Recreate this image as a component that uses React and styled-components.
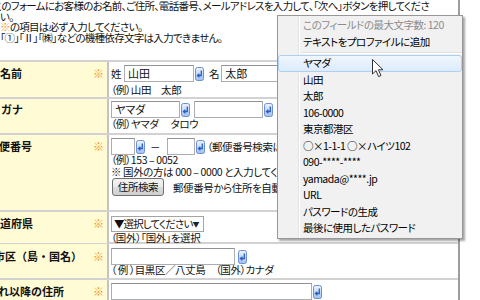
import React from "react";
import styled, { createGlobalStyle } from "styled-components";

const Global = createGlobalStyle`
  html, body { margin: 0; padding: 0; background: #fff; }
  body {
    width: 480px; height: 300px; overflow: hidden;
    font-family: "Noto Sans CJK JP", "Noto Sans", sans-serif;
    color: #111;
  }
`;

const Page = styled.div`
  position: relative;
  width: 480px;
  height: 300px;
  overflow: hidden;
  background: #fff;
`;

const Frame = styled.div`
  width: 458px;
  height: 300px;
  border-right: 2px solid #9d9d9d;
  overflow: hidden;
`;

const Intro = styled.div`
  height: 60px;
  box-sizing: border-box;
  padding-top: 1px;
  font-size: 10.5px;
  line-height: 10.5px;
  font-feature-settings: "palt";
  letter-spacing: -0.7px;
`;

const IntroLine = styled.div`
  white-space: nowrap;
  margin-left: ${(p) => p.$shift || 0}px;
`;

const Mark = styled.span`
  color: #f7941d;
  font-weight: normal;
`;

const Row = styled.div`
  display: grid;
  grid-template-columns: 109px 1fr;
  height: ${(p) => p.$h}px;
  box-sizing: border-box;
  border-top: 2px solid #d2d2d2;
`;

const LabelCell = styled.div`
  display: flex;
  justify-content: space-between;
  align-items: flex-start;
  box-sizing: border-box;
  background: #fffbd4;
  border-right: 2px solid #c3c3c3;
  padding: ${(p) => p.$pad}px 3px 0 0;
  overflow: hidden;
  font-size: 11px;
  line-height: 17px;
`;

const LabelText = styled.span`
  font-weight: bold;
  white-space: nowrap;
  margin-left: -${(p) => p.$cut}px;
`;

const InputCell = styled.div`
  display: flex;
  flex-direction: column;
  align-items: flex-start;
  padding: ${(p) => p.$pad}px 0 0 2px;
  font-size: 10.5px;
  letter-spacing: -0.4px;
  font-feature-settings: "palt";
  min-width: 0;
`;

const Line = styled.div`
  display: flex;
  align-items: center;
  height: ${(p) => p.$h || 17}px;
  white-space: nowrap;
`;

const Hint = styled.div`
  white-space: nowrap;
  line-height: ${(p) => p.$lh || 12}px;
  margin-top: ${(p) => p.$mt || 0}px;
`;

const TextBox = styled.div`
  box-sizing: border-box;
  width: ${(p) => p.$w}px;
  height: ${(p) => p.$h || 17}px;
  margin-left: ${(p) => p.$ml || 0}px;
  border: 1px solid #abadb3;
  border-top-color: #8f9296;
  background: #fff;
  padding: 0 3px;
  font-size: 11px;
  letter-spacing: 0;
  line-height: ${(p) => (p.$h || 17) - 2}px;
  overflow: hidden;
`;

const Select = styled.div`
  box-sizing: border-box;
  display: flex;
  align-items: center;
  justify-content: space-between;
  width: ${(p) => p.$w}px;
  height: 16px;
  border: 1px solid #a5a5a5;
  background: #fff;
  padding: 0 5px 0 2px;
  letter-spacing: -0.9px;
  line-height: 14px;
`;

const Caret = styled.span`
  font-size: 7px;
  color: #222;
`;

const Word = styled.span`
  margin-left: ${(p) => p.$ml || 0}px;
  margin-right: ${(p) => p.$mr || 0}px;
`;

const Button = styled.div`
  box-sizing: border-box;
  width: ${(p) => p.$w}px;
  height: 18px;
  margin-left: 1px;
  border: 1px solid #707070;
  border-radius: 3px;
  background: linear-gradient(#f2f2f2 0%, #ebebeb 50%, #dddddd 51%, #cfcfcf 100%);
  text-align: center;
  line-height: 16px;
`;

const KeySvg = styled.svg`
  flex: none;
  margin-left: ${(p) => p.$ml || 1}px;
`;

const KeyIcon = ({ ml }) => (
  <KeySvg $ml={ml} width="9" height="14" viewBox="0 0 9 14">
    <defs>
      <linearGradient id="keygrad" x1="0" y1="0" x2="0" y2="1">
        <stop offset="0" stopColor="#eef4fd" />
        <stop offset="1" stopColor="#9fbff0" />
      </linearGradient>
    </defs>
    <rect x="0.5" y="0.5" width="8" height="13" rx="2" fill="url(#keygrad)" stroke="#6a8fd2" />
    <path d="M6.3 3.5V8.5H2.8" fill="none" stroke="#2a5fc2" strokeWidth="1.3" />
    <path d="M4.4 6.7L2.5 8.5L4.4 10.3" fill="none" stroke="#2a5fc2" strokeWidth="1.3" />
  </KeySvg>
);

const Menu = styled.div`
  position: absolute;
  left: 277px;
  top: 15px;
  width: 186px;
  box-sizing: border-box;
  border: 1px solid #979797;
  background: linear-gradient(
    to right,
    #f1f1f1 20px,
    #e2e3e3 20px,
    #e2e3e3 21px,
    #ffffff 21px,
    #ffffff 22px,
    #f1f1f1 22px
  );
  box-shadow: 2px 2px 2px rgba(0, 0, 0, 0.35);
  padding: 1px 0;
  font-size: 10.5px;
  letter-spacing: -0.5px;
  font-feature-settings: "palt";
  color: #000;
`;

const MenuItem = styled.div`
  box-sizing: border-box;
  height: 16.5px;
  line-height: 14.5px;
  padding-left: 24px;
  border: 1px solid ${(p) => (p.$active ? "#aed0f2" : "transparent")};
  border-radius: 3px;
  background: ${(p) =>
    p.$active ? "linear-gradient(#f0f6fd, #dcebfb)" : "transparent"};
  color: ${(p) => (p.$disabled ? "#8c8c8c" : "#000")};
  white-space: nowrap;
`;

const MenuSep = styled.div`
  height: 5px;
  margin-left: 23px;
  background: linear-gradient(
    to bottom,
    transparent 2px,
    #e0e0e0 2px,
    #e0e0e0 3px,
    #ffffff 3px,
    #ffffff 4px,
    transparent 4px
  );
`;

const CursorSvg = styled.svg`
  position: absolute;
  left: 372px;
  top: 59px;
`;

const menuItems = [
  "山田",
  "太郎",
  "106-0000",
  "東京都港区",
  "○×1-1-1 ○×ハイツ102",
  "090-****-****",
  "yamada@****.jp",
  "URL",
  "パスワードの生成",
  "最後に使用したパスワード",
];

const Req = () => <Mark>※</Mark>;

export default function App() {
  return (
    <Page>
      <Global />
      <Frame>
        <Intro>
          <IntroLine $shift={-7}>
            このフォームにお客様のお名前、ご住所、電話番号、メールアドレスを入力して、「次へ」ボタンを押してくださ
          </IntroLine>
          <IntroLine>い。</IntroLine>
          <IntroLine>
            <Mark>※</Mark>の項目は必ず入力してください。
          </IntroLine>
          <IntroLine>「①」「Ⅱ」「㈱」などの機種依存文字は入力できません。</IntroLine>
        </Intro>

        <Row $h={37}>
          <LabelCell $pad={3}>
            <LabelText $cut={11}>お名前</LabelText>
            <Req />
          </LabelCell>
          <InputCell $pad={3}>
            <Line>
              <Word>姓</Word>
              <TextBox $w={70} $ml={3}>山田</TextBox>
              <KeyIcon />
              <Word $ml={5}>名</Word>
              <TextBox $w={90} $ml={2}>太郎</TextBox>
            </Line>
            <Hint $mt={2}>（例）山田　太郎</Hint>
          </InputCell>
        </Row>

        <Row $h={36}>
          <LabelCell $pad={2}>
            <LabelText $cut={21}>フリガナ</LabelText>
          </LabelCell>
          <InputCell $pad={2}>
            <Line>
              <TextBox $w={69}>ヤマダ</TextBox>
              <KeyIcon />
              <TextBox $w={69} $ml={4} />
              <KeyIcon />
            </Line>
            <Hint>（例）ヤマダ　 タロウ</Hint>
          </InputCell>
        </Row>

        <Row $h={77}>
          <LabelCell $pad={3}>
            <LabelText $cut={12}>郵便番号</LabelText>
            <Req />
          </LabelCell>
          <InputCell $pad={3}>
            <Line>
              <TextBox $w={24} />
              <KeyIcon />
              <Word $ml={5} $mr={7}>－</Word>
              <TextBox $w={28} />
              <KeyIcon />
              <Word $ml={2}>（郵便番号検索はこちら）</Word>
            </Line>
            <Hint $mt={-1}>（例）153 – 0052</Hint>
            <Hint>※ 国外の方は 000 – 0000 と入力してください。</Hint>
            <Line $h={18}>
              <Button $w={52}>住所検索</Button>
              <Word $ml={9}>郵便番号から住所を自動入力します。</Word>
            </Line>
          </InputCell>
        </Row>

        <Row $h={32}>
          <LabelCell $pad={3}>
            <LabelText $cut={11}>都道府県</LabelText>
            <Req />
          </LabelCell>
          <InputCell $pad={3}>
            <Line>
              <Select $w={93}>
                <span>▼選択してください</span>
                <Caret>▼</Caret>
              </Select>
            </Line>
            <Hint $lh={11}>（国外）「国外」を選択</Hint>
          </InputCell>
        </Row>

        <Row $h={36}>
          <LabelCell $pad={4}>
            <LabelText $cut={6}>市区（島・国名）</LabelText>
            <Req />
          </LabelCell>
          <InputCell $pad={4}>
            <Line>
              <TextBox $w={124} />
              <KeyIcon ml={3} />
            </Line>
            <Hint $mt={-1}>（ 例 ）目黒区／八丈島　（国外）カナダ</Hint>
          </InputCell>
        </Row>

        <Row $h={40}>
          <LabelCell $pad={3}>
            <LabelText $cut={13}>それ以降の住所</LabelText>
            <Req />
          </LabelCell>
          <InputCell $pad={3}>
            <Line>
              <TextBox $w={201} />
              <KeyIcon />
            </Line>
          </InputCell>
        </Row>
      </Frame>

      <Menu>
        <MenuItem $disabled>このフィールドの最大文字数: 120</MenuItem>
        <MenuItem>テキストをプロファイルに追加</MenuItem>
        <MenuSep />
        <MenuItem $active>ヤマダ</MenuItem>
        {menuItems.map((t) => (
          <MenuItem key={t}>{t}</MenuItem>
        ))}
      </Menu>

      <CursorSvg width="12" height="19" viewBox="0 0 12 19">
        <path
          d="M0.5 0.5 L0.5 15 L4 11.6 L6.6 17.6 L9 16.6 L6.4 10.8 L11 10.8 Z"
          fill="#fff"
          stroke="#333"
          strokeWidth="1"
          strokeLinejoin="round"
        />
      </CursorSvg>
    </Page>
  );
}
